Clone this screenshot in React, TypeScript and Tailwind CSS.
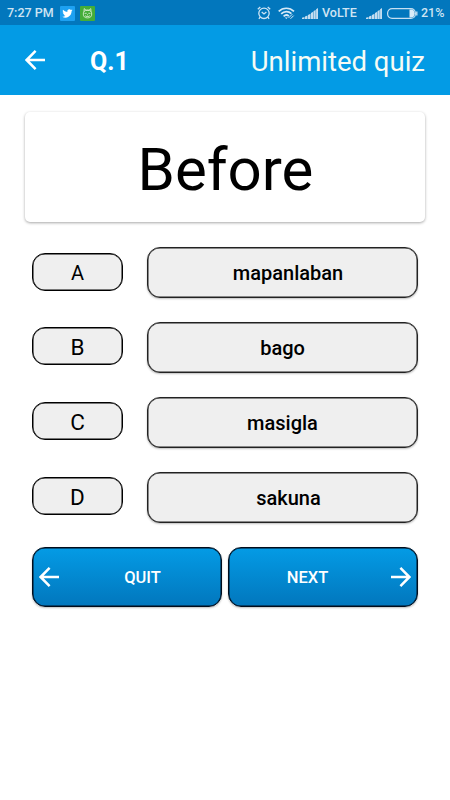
import type { ReactNode } from "react"

const ANSWERS = [
  { letter: "A", text: "mapanlaban", badge: "mt-[6px] pt-[2px] text-[20px]", shift: "pl-[11px]" },
  { letter: "B", text: "bago", badge: "mt-[5px] pt-[3px] text-[22.5px]", shift: "" },
  { letter: "C", text: "masigla", badge: "mt-[5px] pt-[3px] text-[22.5px]", shift: "" },
  { letter: "D", text: "sakuna", badge: "mt-[5px] pt-[3px] text-[22.5px]", shift: "pl-[12px]" },
]

function ArrowIcon({ className = "" }: { className?: string }) {
  return (
    <svg viewBox="0 0 20 20" className={`h-5 w-5 shrink-0 ${className}`} fill="none" stroke="white" strokeWidth="2.5">
      <path d="M20 10H2M10.6 0.9L1.6 10l9 9.1" />
    </svg>
  )
}

function TwitterIcon() {
  return (
    <svg viewBox="0 0 15 15" className="ml-[6px] h-[15px] w-[15px]">
      <rect width="15" height="15" rx="1" fill="#1da1f2" />
      <path
        transform="translate(2.3 2.3) scale(.43)"
        fill="white"
        d="M23.9 4.6a10 10 0 0 1-2.8.8 4.9 4.9 0 0 0 2.1-2.7 9.9 9.9 0 0 1-3.1 1.2 4.9 4.9 0 0 0-8.4 4.5A14 14 0 0 1 1.6 3.2a4.9 4.9 0 0 0 1.5 6.5 4.9 4.9 0 0 1-2.2-.6v.1a4.9 4.9 0 0 0 3.9 4.8 5 5 0 0 1-2.2.1 4.9 4.9 0 0 0 4.6 3.4A9.9 9.9 0 0 1 0 19.5a14 14 0 0 0 7.5 2.2c9 0 14-7.5 14-14v-.6a10 10 0 0 0 2.4-2.5z"
      />
    </svg>
  )
}

function CatIcon() {
  return (
    <svg viewBox="0 0 15 15" className="ml-[5px] h-[15px] w-[15px]">
      <rect width="15" height="15" rx="1" fill="#44ad38" />
      <g fill="none" stroke="#e5f5dc" strokeWidth=".8">
        <path d="M4 5.5L4.2 2.6l1.9 1.7h2.8l1.9-1.7.2 2.9" />
        <ellipse cx="7.5" cy="8" rx="4.2" ry="3.9" />
        <path d="M4.5 7.3h2.2M8.3 7.3h2.2M5 9.5l1 .9h3l1-.9M7 8.8h1" />
      </g>
    </svg>
  )
}

function AlarmIcon() {
  return (
    <svg viewBox="0 0 14 14" className="h-[14px] w-[14px]" fill="none" stroke="#cfe5f5" strokeWidth="1.3">
      <circle cx="7" cy="7.3" r="5.2" />
      <path d="M4.7 5.9L7 7.9l2.4-2M.8 3.2L3.3 1M13.2 3.2L10.7 1M3.1 11.2l-1.2 1.6M10.9 11.2l1.2 1.6" />
    </svg>
  )
}

function WifiIcon() {
  return (
    <svg viewBox="0 0 17 13" className="ml-[7px] h-[13px] w-[17px]" fill="none" stroke="#d7eaf7" strokeWidth="1.7">
      <path d="M.7 4.4c4.3-4.2 11-4.2 15.3 0M3.2 6.9c2.9-2.9 7.4-2.9 10.2-.2M5.6 9.3c1.6-1.5 3.8-1.5 5.3-.1" />
      <path d="M6.8 10.4L8.3 12l1.5-1.6z" fill="#d7eaf7" stroke="none" />
      <path d="M10.5 11l3.8-3.8M12.5 11.8l3.2-3.2" strokeWidth="1" />
    </svg>
  )
}

function SignalIcon({ className = "" }: { className?: string }) {
  return (
    <svg viewBox="0 0 16 11" className={`h-[11px] w-4 ${className}`} fill="#c4ddf0">
      <path d="M0 11V9.8l2.5-.8v2zM3 11V8.6l2.5-1V11zM6 11V6.9l2.5-1.2V11zM9 11V4.9l2.2-1.2V11zM11.6 11V3.1l2.1-1.1v9zM14.1 11V1.3L16 0v11z" />
    </svg>
  )
}

function BatteryIcon() {
  return (
    <svg viewBox="0 0 31 11" className="ml-[5px] h-[11px] w-[31px]" fill="none" stroke="#c5dff2">
      <rect x=".6" y=".6" width="27.8" height="9.8" rx="4.5" strokeWidth="1.2" />
      <path d="M22.5 1.5h3q2.2 1 2.2 4t-2.2 4h-3z" fill="#d9ebf8" stroke="none" />
      <path d="M29.8 3.5v4" strokeWidth="1.4" />
    </svg>
  )
}

function StatusBar() {
  return (
    <div className="flex h-[25px] items-center bg-[#0277bd] pt-px pr-[7px] pl-[7px] text-[12.5px] font-medium text-[#cfe4f3]">
      <span className="w-[47px] whitespace-nowrap">7:27 PM</span>
      <TwitterIcon />
      <CatIcon />
      <div className="ml-auto flex items-center">
        <AlarmIcon />
        <WifiIcon />
        <SignalIcon className="ml-[7px]" />
        <span className="ml-1 w-[37px] whitespace-nowrap">VoLTE</span>
        <SignalIcon className="ml-[7px]" />
        <BatteryIcon />
        <span className="ml-[3px] w-[22px] whitespace-nowrap">21%</span>
      </div>
    </div>
  )
}

function ActionButton({ children }: { children: ReactNode }) {
  return (
    <button className="flex h-[60px] w-[190px] items-center rounded-[13px] border border-[#020d1c] bg-linear-to-b from-[#049be5] to-[#0277bd] px-[6px] text-[16.5px] font-medium text-white shadow-[inset_0_0_0_0.5px_#020d1c,0_1px_2px_rgba(0,0,0,0.25)]">
      {children}
    </button>
  )
}

export default function App() {
  return (
    <main className="h-[800px] w-[450px] overflow-hidden bg-white font-[Roboto,sans-serif] text-black">
      <StatusBar />

      <header className="flex h-[70px] items-center bg-[#039be5] px-[25px] pt-[4px] text-white">
        <ArrowIcon className="-mt-1" />
        <span className="ml-[45px] text-[25px] font-bold">Q.1</span>
        <h1 className="ml-auto text-[27.5px] text-[#f5fbf5]">Unlimited quiz</h1>
      </header>

      <section className="mx-[25px] mt-[17px] flex h-[110px] items-center justify-center rounded-[5px] bg-white pt-[6px] pl-px text-[60px] shadow-[0_1px_3px_rgba(0,0,0,0.35)]">
        Before
      </section>

      <div className="mt-[25px] ml-8 flex flex-col gap-[24px]">
        {ANSWERS.map((a) => (
          <div key={a.letter} className="flex h-[51px] items-start gap-[24px]">
            <button
              className={`flex h-[38px] w-[91px] items-center justify-center rounded-[13px] border border-black bg-[#efefef] shadow-[inset_0_0_0_0.5px_#000] ${a.badge}`}
            >
              {a.letter}
            </button>
            <button
              className={`flex h-[51px] w-[271px] items-center justify-center rounded-[13px] border border-[#222] bg-[#efefef] pt-px text-[20px] font-medium shadow-[inset_0_0_0_0.5px_#222,0_1px_2px_rgba(0,0,0,0.25)] ${a.shift}`}
            >
              {a.text}
            </button>
          </div>
        ))}
      </div>

      <div className="mt-6 ml-8 flex gap-[6px]">
        <ActionButton>
          <ArrowIcon />
          <span className="ml-[11px] flex-1 pt-[3px] text-center">QUIT</span>
        </ActionButton>
        <ActionButton>
          <span className="mr-[11px] flex-1 pt-[3px] text-center">NEXT</span>
          <ArrowIcon className="rotate-180" />
        </ActionButton>
      </div>
    </main>
  )
}
